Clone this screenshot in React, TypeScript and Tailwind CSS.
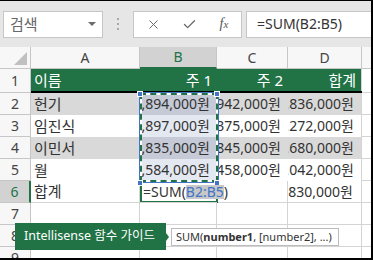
import { Check, X } from 'lucide-react'

type DataRow = {
  n: number
  name: string
  w1: string
  w2: string
  total: string
  shaded: boolean
}

const dataRows: DataRow[] = [
  { n: 2, name: '헌기', w1: '1,894,000원', w2: '1,942,000원', total: '1,836,000원', shaded: true },
  { n: 3, name: '임진식', w1: '1,897,000원', w2: '1,375,000원', total: '1,272,000원', shaded: false },
  { n: 4, name: '이민서', w1: '1,835,000원', w2: '1,845,000원', total: '1,680,000원', shaded: true },
  { n: 5, name: '월', w1: '1,584,000원', w2: '1,458,000원', total: '2,042,000원', shaded: false },
]

const gridCols = 'grid grid-cols-[31px_109px_77px_71px_74px_9px]'

function RowHead({ n, active = false }: { n: number; active?: boolean }) {
  return (
    <div
      className={
        active
          ? 'flex items-center justify-center border-b border-r-2 border-b-[#c6c6c6] border-r-[#217346] bg-[#d2d2d2] text-[14px] text-[#217346]'
          : 'flex items-center justify-center border-b border-r border-[#c6c6c6] bg-[#f7f7f7] text-[14px] text-[#444]'
      }
    >
      {n}
    </div>
  )
}

function Num({ value, bg }: { value: string; bg: string }) {
  return (
    <div className={`flex items-center justify-end overflow-hidden whitespace-nowrap pr-[7px] text-[14px] text-[#333] ${bg}`}>
      <span>{value}</span>
    </div>
  )
}

function Toolbar() {
  return (
    <div className="flex h-[46px] shrink-0 items-center bg-[#e6e6e6]">
      <div className="ml-[3px] flex h-[27px] w-[100px] items-center justify-between border border-[#c6c6c6] bg-white pl-[6px] pr-[6px]">
        <span className="text-[15px] text-[#666]">검색</span>
        <span className="h-0 w-0 border-x-[4px] border-t-[4px] border-x-transparent border-t-[#6b6b6b]" />
      </div>
      <div className="ml-[14px] flex flex-col gap-[3px]">
        <span className="size-[2px] bg-[#a8a8a8]" />
        <span className="size-[2px] bg-[#a8a8a8]" />
        <span className="size-[2px] bg-[#a8a8a8]" />
      </div>
      <div className="ml-[14px] flex h-[27px] w-[109px] items-center border border-[#c6c6c6] bg-white text-[#6b6b6b]">
        <span className="flex w-[38px] justify-center pl-[1px]">
          <X size={15} strokeWidth={1.6} />
        </span>
        <span className="flex w-[35px] justify-center">
          <Check size={15} strokeWidth={2.2} />
        </span>
        <span className="flex w-[34px] items-baseline justify-center font-['Liberation_Serif',serif] text-[14px] italic text-[#555]">
          f<span className="text-[11px]">x</span>
        </span>
      </div>
      <div className="ml-[4px] flex h-[27px] flex-1 items-center border-y border-l border-[#c6c6c6] bg-white pl-[10px] text-[14px] text-[#333]">
        =SUM(B2:B5)
      </div>
    </div>
  )
}

function Sheet() {
  return (
    <div className="relative flex-1">
      {/* column headers */}
      <div className={`${gridCols} h-[22px] bg-[#f7f7f7] text-[14px] text-[#444]`}>
        <div className="relative border-b border-r border-[#c6c6c6]">
          <span className="absolute bottom-[3px] right-[3px] h-0 w-0 border-b-0 border-l-[13px] border-r-[13px] border-t-[13px] border-l-transparent border-r-[#c0c0c0] border-t-transparent" />
        </div>
        <div className="flex items-center justify-center border-b border-r border-[#c6c6c6]">A</div>
        <div className="flex items-center justify-center border-b-2 border-r border-b-[#217346] border-r-[#c6c6c6] bg-[#d2d2d2] text-[#217346]">
          B
        </div>
        <div className="flex items-center justify-center border-b border-r border-[#c6c6c6]">C</div>
        <div className="flex items-center justify-center border-b border-r border-[#c6c6c6]">D</div>
        <div className="border-b border-[#c6c6c6]" />
      </div>

      {/* row 1: table header */}
      <div className={`${gridCols} h-[24px]`}>
        <RowHead n={1} />
        <div className="col-span-4 grid grid-cols-[109px_77px_71px_74px] border-b-2 border-black bg-[#217346] text-[15px] text-white">
          <div className="flex items-center pl-[3px]">이름</div>
          <div className="flex items-center justify-end pr-[5px]">주 1</div>
          <div className="flex items-center justify-end pr-[5px]">주 2</div>
          <div className="flex items-center justify-end border-r border-[#d4d4d4] pr-[5px]">합계</div>
        </div>
        <div className="border-b border-[#d4d4d4]" />
      </div>

      {dataRows.map((row) => (
        <div key={row.n} className={`${gridCols} h-[22px]`}>
          <RowHead n={row.n} />
          <div
            className={`flex items-center overflow-hidden whitespace-nowrap pl-[3px] text-[15px] text-[#333] ${row.shaded ? 'bg-[#d9d9d9]' : 'bg-white'}`}
          >
            {row.name}
          </div>
          <Num value={row.w1} bg={row.shaded ? 'bg-[#c5cad6]' : 'bg-[#e4e8f1]'} />
          <Num value={row.w2} bg={row.shaded ? 'bg-[#d9d9d9]' : 'bg-white'} />
          <div className={`flex border-r border-[#d4d4d4] ${row.shaded ? 'bg-[#d9d9d9]' : 'bg-white'}`}>
            <Num value={row.total} bg="flex-1" />
          </div>
          <div className="border-b border-[#d4d4d4]" />
        </div>
      ))}

      {/* row 6: totals */}
      <div className={`${gridCols} h-[22px]`}>
        <RowHead n={6} active />
        <div className="flex items-center border-b border-r border-[#d4d4d4] pl-[3px] text-[15px] text-[#333]">합계</div>
        <div className="relative z-10 flex items-center whitespace-nowrap border-b border-[#d4d4d4] pl-[3px] text-[14px] text-[#333]">
          =SUM(<span className="bg-[#c8c8c8] text-[#3f74c9]">B2:B5</span>)
          <span className="ml-[1px] h-[15px] w-px bg-black" />
        </div>
        <div className="border-b border-r border-[#d4d4d4]" />
        <div className="flex items-center justify-end whitespace-nowrap border-b border-r border-[#d4d4d4] pr-[8px] text-[14px] text-[#333]">
          830,000원
        </div>
        <div className="border-b border-[#d4d4d4]" />
      </div>

      {[7, 8, 9].map((n) => (
        <div key={n} className={`${gridCols} h-[22px]`}>
          <RowHead n={n} />
          <div className="border-b border-r border-[#d4d4d4]" />
          <div className="border-b border-r border-[#d4d4d4]" />
          <div className="border-b border-r border-[#d4d4d4]" />
          <div className="border-b border-r border-[#d4d4d4]" />
          <div className="border-b border-[#d4d4d4]" />
        </div>
      ))}

      {/* active cell B6 */}
      <div className="pointer-events-none absolute left-[140px] top-[134px] h-[22px] w-[78px] border-2 border-[#217346]" />

      {/* referenced range B2:B5 */}
      <div className="pointer-events-none absolute left-[139px] top-[45px] h-[91px] w-[80px] border border-[#4472c4]">
        <div className="h-full w-full border-2 border-white">
          <div className="-m-[2px] h-[calc(100%+4px)] w-[calc(100%+4px)] border-2 border-dashed border-[#217346]" />
        </div>
      </div>
      <span className="absolute left-[137px] top-[44px] size-[6px] border border-white bg-[#4472c4]" />
      <span className="absolute left-[214px] top-[44px] size-[6px] border border-white bg-[#4472c4]" />
      <span className="absolute left-[137px] top-[133px] size-[6px] border border-white bg-[#4472c4]" />
      <span className="absolute left-[214px] top-[133px] size-[6px] border border-white bg-[#4472c4]" />

      {/* intellisense callout */}
      <div className="absolute left-[15px] top-[176px] flex items-center">
        <div className="flex h-[27px] w-[151px] items-center bg-[#217346] pl-[9px] text-[12.5px] text-white">
          Intellisense 함수 가이드
        </div>
        <span className="h-0 w-0 border-y-[4px] border-l-[3px] border-y-transparent border-l-[#217346]" />
        <div className="ml-[2px] flex h-[18px] w-[168px] items-center border border-[#bcbcbc] bg-white pl-[4px] text-[11px] text-[#333]">
          SUM(<b className="font-bold">number1</b>, [number2], ...)
        </div>
      </div>
    </div>
  )
}

export default function App() {
  return (
    <div className="flex h-[260px] w-[373px] flex-col overflow-hidden border-b-2 border-r-2 border-t border-black bg-white font-['Noto_Sans','Noto_Sans_CJK_KR',sans-serif] leading-none">
      <Toolbar />
      <Sheet />
    </div>
  )
}
